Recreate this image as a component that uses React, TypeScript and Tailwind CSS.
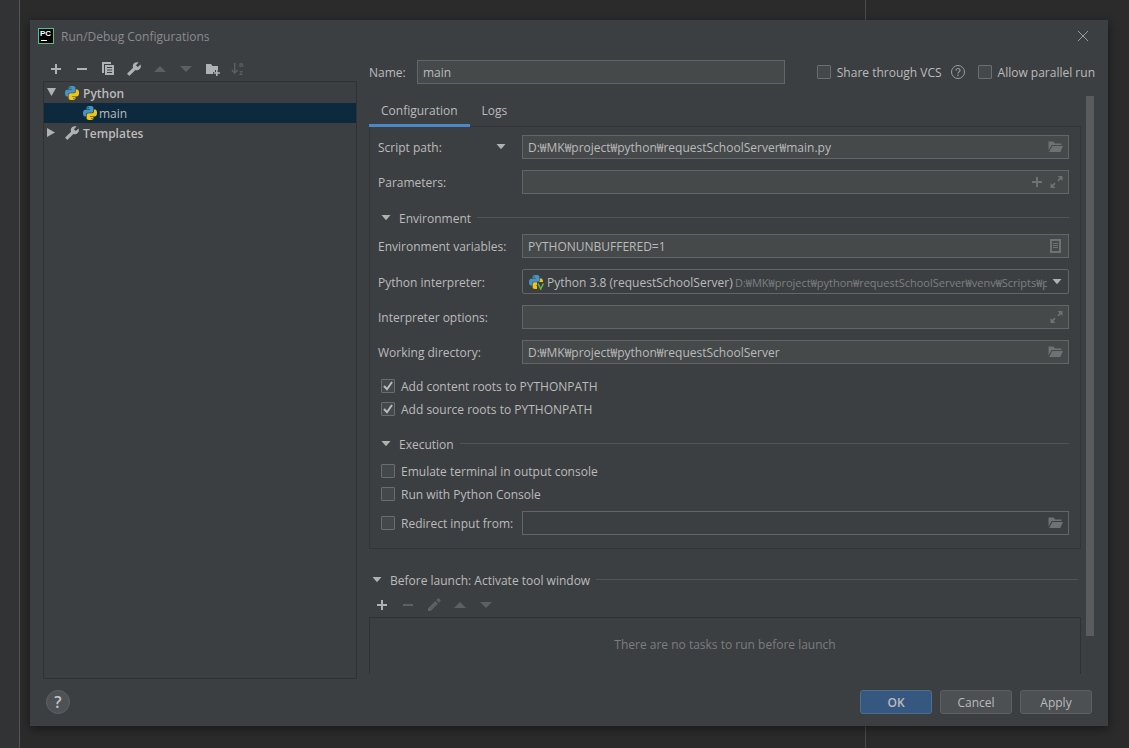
import { useState } from 'react'
import type { ReactNode } from 'react'
import clsx from 'clsx'

const WORKING_DIR = 'D:₩MK₩project₩python₩requestSchoolServer'

const FIELD = 'flex h-6 min-w-0 flex-1 items-center border border-[#646566] pr-[3px]'
const FIELD_INPUT = 'h-full min-w-0 flex-1 bg-transparent px-[5px] outline-none'

function Icon({ children, className = 'text-[#afb1b3]' }: { children: ReactNode; className?: string }) {
    return (
        <svg viewBox="0 0 16 16" className={clsx('h-4 w-4 shrink-0', className)} fill="currentColor" aria-hidden="true">
            {children}
        </svg>
    )
}

const PLUS = <path d="M7 3h2v4h4v2H9v4H7V9H3V7h4z" />
const MINUS = <path d="M3 7h10v2H3z" />
const UP = <path d="M2 11l6-6 6 6z" />
const DOWN = <path d="M2 5h12l-6 6z" />
const CARET = <path d="M3.5 5h9L8 10.3z" />
const WRENCH = (
    <path
        transform="translate(15.5 .5) scale(-.62 .62)"
        d="M22.7 19l-9.1-9.1c.9-2.3.4-5-1.5-6.9-2-2-5-2.4-7.4-1.3L9 6 6 9 1.6 4.7C.4 7.1.9 10.1 2.9 12.1c1.9 1.9 4.6 2.4 6.9 1.5l9.1 9.1c.4.4 1 .4 1.4 0l2.3-2.3c.5-.4.5-1.1.1-1.4z"
    />
)
const COPY = (
    <>
        <path d="M2 1h9v2H4v9H2z" />
        <path fillRule="evenodd" d="M5 4h9v10H5zM7 6v1h5V6zM7 8.5v1h5v-1zM7 11v1h5v-1z" />
    </>
)
const FOLDER_ADD = (
    <>
        <path d="M2 3h5l1.5 2H14v4h-3v2h-2v2H2z" />
        <path d="M12 9h1.6v2.2H16v1.6h-2.4V15H12v-2.2H9.8v-1.6H12z" />
    </>
)
const SORT = (
    <>
        <path d="M4 2h1.4v8.2l1.7-1.7 1 1L4.7 13 1.3 9.5l1-1L4 10.2z" />
        <g fontSize="8" fontWeight="700" fontFamily="Liberation Sans">
            <text x="9" y="6">a</text>
            <text x="9" y="14">z</text>
        </g>
    </>
)
const PENCIL = <path d="M2 11.2L9.3 4l2.7 2.7L4.7 14H2zM10.2 3.1l1.5-1.5a1 1 0 011.4 0l1.3 1.3a1 1 0 010 1.4l-1.5 1.5z" />
const FOLDER_OPEN = (
    <>
        <path d="M.5 2.5h5l1.5 2h6.5V6H3.7L.5 11.5z" />
        <path d="M4.3 7H15l-2.7 6H1.1z" />
    </>
)
const EXPAND = <path d="M9.5 2h5v5l-1.8-1.8-2.2 2.2-1.1-1.1L11.5 4zM7.5 14h-5V9l1.8 1.8 2.2-2.2 1.1 1.1L5.5 12z" />
const LIST = (
    <path fillRule="evenodd" d="M2 1h11v14H2zM4 3v10h7V3zM5 5h5v1H5zM5 7h5v1H5zM5 9h5v1H5z" />
)

function PythonIcon({ venv = false }: { venv?: boolean }) {
    return (
        <svg viewBox="0 0 16 16" className="h-4 w-4 shrink-0" aria-hidden="true">
            <g transform="translate(1 1) scale(.585)">
                <path
                    fill="#4495c6"
                    d="M11.914 0C5.82 0 6.2 2.656 6.2 2.656l.007 2.752h5.814v.826H3.9S0 5.789 0 11.969c0 6.18 3.403 5.96 3.403 5.96h2.03v-2.867s-.109-3.42 3.35-3.42h5.766s3.24.052 3.24-3.148V3.202S18.28 0 11.913 0zM8.708 1.85c.578 0 1.046.47 1.046 1.052 0 .581-.468 1.052-1.046 1.052-.579 0-1.046-.47-1.046-1.052 0-.582.467-1.052 1.046-1.052z"
                />
                <path
                    fill="#f0c514"
                    d="M12.087 24c6.092 0 5.712-2.656 5.712-2.656l-.007-2.752h-5.814v-.826h8.123s3.9.445 3.9-5.735c0-6.18-3.404-5.96-3.404-5.96h-2.03v2.867s.109 3.42-3.35 3.42H9.452s-3.24-.052-3.24 3.148v5.292S5.72 24 12.087 24zm3.206-1.85c-.579 0-1.046-.47-1.046-1.052 0-.581.467-1.052 1.046-1.052.578 0 1.046.47 1.046 1.052 0 .582-.468 1.052-1.046 1.052z"
                />
            </g>
            {venv && (
                <>
                    <path d="M9 8h7v8H9z" fill="#3c3f41" />
                    <path d="M10 9.5l2.7 5.5 2.7-5.5" fill="none" stroke="#62b543" strokeWidth="1.5" />
                </>
            )}
        </svg>
    )
}

function ToolButton({ label, icon, disabled = false }: { label: string; icon: ReactNode; disabled?: boolean }) {
    return (
        <button type="button" aria-label={label} disabled={disabled} className="flex h-6 w-[26px] items-center justify-center">
            <Icon className={disabled ? 'text-[#5d6062]' : 'text-[#afb1b3]'}>{icon}</Icon>
        </button>
    )
}

function FieldButton({ label, icon }: { label: string; icon: ReactNode }) {
    return (
        <button type="button" aria-label={label} className="flex h-5 w-[19px] items-center justify-center">
            <Icon className="text-[#6e7274]">{icon}</Icon>
        </button>
    )
}

function Checkbox({ label, defaultChecked = false }: { label: string; defaultChecked?: boolean }) {
    return (
        <label className="flex h-[23px] shrink-0 items-center gap-1.5 whitespace-nowrap">
            <span className="grid">
                <input
                    type="checkbox"
                    defaultChecked={defaultChecked}
                    className="peer h-3.5 w-3.5 appearance-none rounded-[1px] border border-[#6b6e70] bg-[#43494a] [grid-area:1/1]"
                />
                <svg
                    viewBox="0 0 14 14"
                    className="pointer-events-none invisible h-3.5 w-3.5 peer-checked:visible [grid-area:1/1]"
                    fill="none"
                    stroke="#bbbbbb"
                    strokeWidth="2"
                    aria-hidden="true"
                >
                    <path d="M3 7l3 3.2L11 3" />
                </svg>
            </span>
            <span className="pt-0.5">{label}</span>
        </label>
    )
}

function SectionHeading({ title }: { title: string }) {
    return (
        <button type="button" aria-expanded="true" className="flex h-[21px] w-full items-center whitespace-nowrap">
            <Icon>{CARET}</Icon>
            <span className="ml-[5px] pt-0.5">{title}</span>
            <span className="ml-1.5 h-px flex-1 bg-[#515355]" />
        </button>
    )
}

function FormRow({ id, label, aside, children }: { id: string; label: string; aside?: ReactNode; children: ReactNode }) {
    return (
        <div className="flex items-center">
            <div className="flex w-36 shrink-0 items-center justify-between pr-[13px]">
                <label htmlFor={id} className="pt-0.5 whitespace-nowrap">
                    {label}
                </label>
                {aside}
            </div>
            {children}
        </div>
    )
}

function ConfigurationTree() {
    return (
        <div className="flex w-[314px] shrink-0 flex-col pt-[5px]">
            <div className="flex">
                <ToolButton label="Add configuration" icon={PLUS} />
                <ToolButton label="Remove configuration" icon={MINUS} />
                <ToolButton label="Copy configuration" icon={COPY} />
                <ToolButton label="Edit templates" icon={WRENCH} />
                <ToolButton label="Move up" icon={UP} disabled />
                <ToolButton label="Move down" icon={DOWN} disabled />
                <ToolButton label="Create folder" icon={FOLDER_ADD} />
                <ToolButton label="Sort configurations" icon={SORT} disabled />
            </div>
            <ul role="tree" aria-label="Configurations" className="flex-1 border border-[#2f3234] pt-px">
                <li role="treeitem" aria-expanded="true" className="flex h-5 items-center font-semibold">
                    <Icon>
                        <path d="M3 3h9L7.5 11z" />
                    </Icon>
                    <span className="ml-1 flex items-center gap-[3px]">
                        <PythonIcon />
                        <span className="pt-0.5">Python</span>
                    </span>
                </li>
                <li role="treeitem" aria-selected="true" className="flex h-5 items-center gap-px bg-[#0d293e] pl-[38px]">
                    <PythonIcon />
                    <span className="pt-0.5">main</span>
                </li>
                <li role="treeitem" aria-expanded="false" className="flex h-5 items-center font-semibold">
                    <Icon>
                        <path d="M3 3v9l8-4.5z" />
                    </Icon>
                    <span className="ml-1 flex items-center gap-[3px]">
                        <Icon>{WRENCH}</Icon>
                        <span className="pt-0.5">Templates</span>
                    </span>
                </li>
            </ul>
        </div>
    )
}

function ConfigurationPanel() {
    return (
        <div className="border border-[#323537] pt-2 pr-[11px] pb-[13px] pl-2">
            <div className="flex flex-col gap-[11px]">
                <FormRow
                    id="script-path"
                    label="Script path:"
                    aside={
                        <button type="button" aria-label="Script path or module name">
                            <Icon>{CARET}</Icon>
                        </button>
                    }
                >
                    <div className={clsx(FIELD, 'bg-[#45494a]')}>
                        <input id="script-path" className={FIELD_INPUT} defaultValue={`${WORKING_DIR}₩main.py`} />
                        <FieldButton label="Browse script" icon={FOLDER_OPEN} />
                    </div>
                </FormRow>
                <FormRow id="parameters" label="Parameters:">
                    <div className={clsx(FIELD, 'bg-[#45494a]')}>
                        <input id="parameters" className={FIELD_INPUT} />
                        <FieldButton label="Insert macro" icon={PLUS} />
                        <FieldButton label="Expand parameters" icon={EXPAND} />
                    </div>
                </FormRow>
            </div>

            <div className="mt-[13px] mb-1.5">
                <SectionHeading title="Environment" />
            </div>
            <div className="flex flex-col gap-[11px]">
                <FormRow id="env-vars" label="Environment variables:">
                    <div className={clsx(FIELD, 'bg-[#45494a]')}>
                        <input id="env-vars" className={FIELD_INPUT} defaultValue="PYTHONUNBUFFERED=1" />
                        <FieldButton label="Edit environment variables" icon={LIST} />
                    </div>
                </FormRow>
                <FormRow id="interpreter" label="Python interpreter:">
                    <div className="flex h-[25px] min-w-0 flex-1 items-center rounded-xs border border-[#646566] pr-[3px] pl-[5px]">
                        <PythonIcon venv />
                        <select id="interpreter" className="ml-[3px] shrink-0 appearance-none bg-transparent pt-0.5 outline-none">
                            <option>Python 3.8 (requestSchoolServer)</option>
                        </select>
                        <span className="mr-0.5 ml-0.5 min-w-0 flex-1 overflow-hidden pt-0.5 text-[11px] whitespace-nowrap text-[#7d7f80]">
                            {WORKING_DIR}₩venv₩Scripts₩python.exe
                        </span>
                        <Icon>{CARET}</Icon>
                    </div>
                </FormRow>
                <FormRow id="interpreter-options" label="Interpreter options:">
                    <div className={clsx(FIELD, 'bg-[#45494a]')}>
                        <input id="interpreter-options" className={FIELD_INPUT} />
                        <FieldButton label="Expand interpreter options" icon={EXPAND} />
                    </div>
                </FormRow>
                <FormRow id="working-directory" label="Working directory:">
                    <div className={clsx(FIELD, 'bg-[#45494a]')}>
                        <input id="working-directory" className={FIELD_INPUT} defaultValue={WORKING_DIR} />
                        <FieldButton label="Browse working directory" icon={FOLDER_OPEN} />
                    </div>
                </FormRow>
            </div>
            <div className="mt-2.5 pl-[3px]">
                <Checkbox label="Add content roots to PYTHONPATH" defaultChecked />
                <Checkbox label="Add source roots to PYTHONPATH" defaultChecked />
            </div>

            <div className="mt-[13px] mb-[5px]">
                <SectionHeading title="Execution" />
            </div>
            <div className="pl-[3px]">
                <Checkbox label="Emulate terminal in output console" />
                <Checkbox label="Run with Python Console" />
            </div>
            <div className="mt-1.5 flex items-center">
                <div className="w-36 shrink-0 pl-[3px]">
                    <Checkbox label="Redirect input from:" />
                </div>
                <div className={FIELD}>
                    <input aria-label="Redirect input from" className={FIELD_INPUT} />
                    <FieldButton label="Browse input file" icon={FOLDER_OPEN} />
                </div>
            </div>
        </div>
    )
}

function BeforeLaunch() {
    return (
        <section className="mt-5 flex flex-1 flex-col">
            <div className="pr-[3px]">
                <SectionHeading title="Before launch: Activate tool window" />
            </div>
            <div className="mt-[3px] flex">
                <ToolButton label="Add task" icon={PLUS} />
                <ToolButton label="Remove task" icon={MINUS} disabled />
                <ToolButton label="Edit task" icon={PENCIL} disabled />
                <ToolButton label="Move task up" icon={UP} disabled />
                <ToolButton label="Move task down" icon={DOWN} disabled />
            </div>
            <p className="flex-1 border border-b-0 border-[#2f3234] pt-[18px] text-center text-[#7b7d7e]">
                There are no tasks to run before launch
            </p>
        </section>
    )
}

export default function App() {
    const [tab, setTab] = useState('Configuration')

    return (
        <div className="relative flex min-h-screen bg-[#2b2b2b] font-['Open_Sans','Noto_Sans_CJK_KR',sans-serif] text-[12px] leading-[18px] text-[#bbbbbb]">
            <div className="w-5 shrink-0 border-r border-[#555555] bg-[#313335]" />
            <div className="absolute inset-y-0 left-[865px] w-px bg-[#4b4b4b]" />

            <main className="relative flex min-w-0 flex-1 pt-5 pr-[21px] pb-[22px] pl-2.5">
                <div
                    role="dialog"
                    aria-label="Run/Debug Configurations"
                    className="flex min-w-0 flex-1 flex-col bg-[#3c3f41] shadow-[0_3px_10px_rgba(0,0,0,0.45)]"
                >
                    <header className="flex h-8 items-center pr-[17px] pl-2">
                        <svg viewBox="0 0 16 16" className="h-4 w-4" aria-hidden="true">
                            <path d="M0 0h16v16H0z" fill="#3dc995" />
                            <path d="M1 1h14v14H1z" fill="#000000" />
                            <text x="2" y="8" fontSize="8" fontWeight="700" fontFamily="Liberation Sans" fill="#ffffff">PC</text>
                            <path d="M3 12h6v1H3z" fill="#ffffff" />
                        </svg>
                        <h1 className="ml-[7px] flex-1 pt-0.5 text-[#8a8c8e]">Run/Debug Configurations</h1>
                        <button type="button" aria-label="Close">
                            <Icon className="text-[#9a9c9d]">
                                <path d="M3 3l10 10M13 3L3 13" stroke="currentColor" />
                            </Icon>
                        </button>
                    </header>

                    <div className="flex flex-1 gap-3 px-[13px]">
                        <ConfigurationTree />
                        <div className="mb-[5px] flex min-w-0 flex-1 flex-col pt-2">
                            <div className="flex items-center">
                                <label htmlFor="name" className="w-12 shrink-0 pt-0.5">
                                    Name:
                                </label>
                                <div className={clsx(FIELD, 'bg-[#45494a]')}>
                                    <input id="name" className={FIELD_INPUT} defaultValue="main" />
                                </div>
                                <div className="ml-8 flex items-center">
                                    <Checkbox label="Share through VCS" />
                                    <button type="button" aria-label="About sharing" className="mr-3 ml-2">
                                        <Icon className="text-[#9a9c9e]">
                                            <circle cx="8" cy="8" r="6.5" fill="none" stroke="currentColor" />
                                            <path d="M6 6.5a2 2 0 114 0c0 1.3-2 1.5-2 3" fill="none" stroke="currentColor" strokeWidth="1.2" />
                                            <path d="M7.4 10.6h1.2v1.3H7.4z" />
                                        </Icon>
                                    </button>
                                    <Checkbox label="Allow parallel run" />
                                </div>
                            </div>

                            <div className="mt-3 flex flex-1">
                                <div className="flex min-w-0 flex-1 flex-col">
                                    <div role="tablist" className="relative -mb-px flex h-[31px]">
                                        {['Configuration', 'Logs'].map((name) => (
                                            <button
                                                key={name}
                                                type="button"
                                                role="tab"
                                                aria-selected={tab === name}
                                                onClick={() => setTab(name)}
                                                className={clsx(
                                                    'border-b-3 px-3 pt-0.5',
                                                    tab === name ? 'border-[#4a88c7]' : 'border-transparent',
                                                )}
                                            >
                                                {name}
                                            </button>
                                        ))}
                                    </div>
                                    <ConfigurationPanel />
                                    <BeforeLaunch />
                                </div>
                                <div className="mr-px mb-[38px] ml-[5px] w-2 bg-[#595b5d]" />
                            </div>
                        </div>
                    </div>

                    <footer className="flex items-center gap-2 px-4 pt-[11px] pb-3">
                        <button
                            type="button"
                            aria-label="Help"
                            className="mr-auto h-6 w-6 rounded-full border border-[#5e6163] bg-[#4e5254] text-[16px] leading-5 font-semibold text-[#c3c5c6]"
                        >
                            ?
                        </button>
                        <button type="button" className="h-6 w-[72px] rounded-[3px] border border-[#4c708c] bg-[#365880] pt-0.5 font-semibold">
                            OK
                        </button>
                        <button type="button" className="h-6 w-[72px] rounded-[3px] border border-[#5e6060] bg-[#4c5052] pt-0.5">
                            Cancel
                        </button>
                        <button type="button" className="h-6 w-[72px] rounded-[3px] border border-[#5e6060] bg-[#4c5052] pt-0.5">
                            Apply
                        </button>
                    </footer>
                </div>
            </main>
        </div>
    )
}
